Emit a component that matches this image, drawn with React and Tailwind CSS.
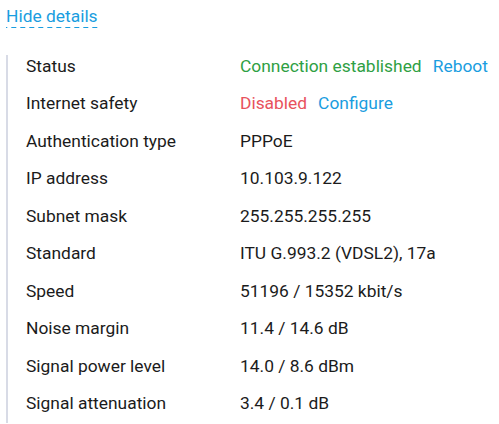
export default function App() {
  const rows = [
    ["Authentication type", "PPPoE"],
    ["IP address", "10.103.9.122"],
    ["Subnet mask", "255.255.255.255"],
    ["Standard", "ITU G.993.2 (VDSL2), 17a"],
    ["Speed", "51196 / 15352 kbit/s"],
    ["Noise margin", "11.4 / 14.6 dB"],
    ["Signal power level", "14.0 / 8.6 dBm"],
    ["Signal attenuation", "3.4 / 0.1 dB"],
  ];
  return (
    <div className="w-[499px] h-[424px] overflow-hidden bg-white pl-[6px] pt-[4px] font-['Roboto',sans-serif] text-[17.4px] leading-[25.5px] text-[#1b1b1b]">
      <div>
        <span className="text-[#1a9de0] pb-[2px] bg-[linear-gradient(to_right,#1a9de0_0_5px,transparent_5px)] bg-[length:9px_1px] bg-repeat-x bg-bottom">
          Hide details
        </span>
      </div>
      <div className="flex mt-[18px]">
        <div className="w-[2px] shrink-0 bg-[#d8dbe6] mt-[7px]" />
        <div className="flex-1 pl-[18px]">
          <div className="flex py-[6px]">
            <div className="w-[214px] shrink-0">Status</div>
            <div className="flex gap-[11px]">
              <span className="text-[#2ea043]">Connection established</span>
              <span className="text-[#1a9de0]">Reboot</span>
            </div>
          </div>
          <div className="flex py-[6px]">
            <div className="w-[214px] shrink-0">Internet safety</div>
            <div className="flex gap-[11px]">
              <span className="text-[#e8525c]">Disabled</span>
              <span className="text-[#1a9de0]">Configure</span>
            </div>
          </div>
          {rows.map(([k, v]) => (
            <div key={k} className="flex py-[6px]">
              <div className="w-[214px] shrink-0">{k}</div>
              <div>{v}</div>
            </div>
          ))}
        </div>
      </div>
    </div>
  );
}
